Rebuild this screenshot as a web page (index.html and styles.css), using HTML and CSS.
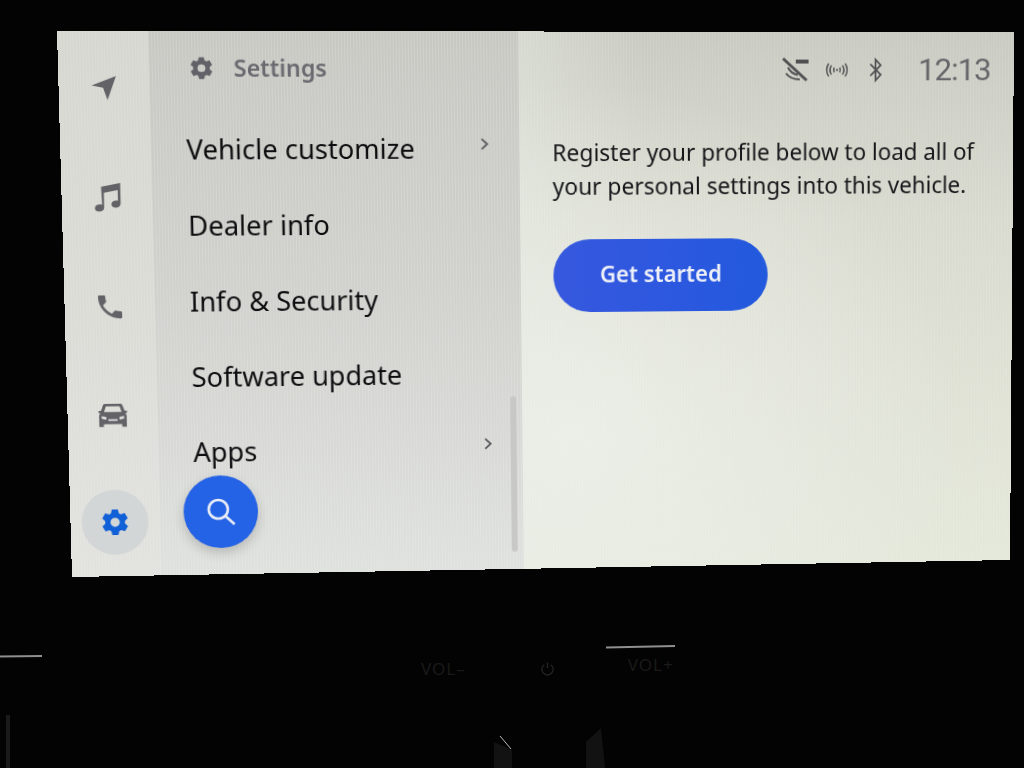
FILE: index.html
```html
<!DOCTYPE html>
<html lang="en">

<head>
    <meta charset="UTF-8">
    <meta name="viewport" content="width=device-width, initial-scale=1.0">
    <title>Settings</title>
    <link rel="stylesheet" href="styles.css">
</head>

<body>
    <svg class="defs" width="0" height="0">
        <symbol id="gear" viewBox="0 0 24 24">
            <path fill-rule="evenodd" d="M9.6 1.6h4.8l.7 3.1 1.5.9 3.1-1 2.4 4.2-2.3 2.1v2.2l2.3 2.1-2.4 4.2-3.1-1-1.5.9-.7 3.1H9.6l-.7-3.1-1.5-.9-3.1 1-2.4-4.2 2.3-2.1v-2.2L1.9 8.800l2.4-4.2 3.100 1 1.500-.9zM12 8.300a3.700 3.700 0 1 0 0 7.400 3.700 3.700 0 0 0 0-7.400z" />
        </symbol>
    </svg>

    <div class="screen">
        <nav class="rail">
            <div class="rail-item">
                <svg class="rail-icon" viewBox="0 0 24 24"><path d="M23 2 1 10.500l10.200 2.300L15 24z" /></svg>
            </div>
            <div class="rail-item">
                <svg class="rail-icon rail-icon-big" viewBox="0 0 24 24"><path d="M7.500 4.500 22 1.500v15.800c0 2-1.800 3.200-3.800 3.200-1.900 0-3.200-1-3.200-2.500 0-1.700 1.700-3 3.700-3 .5 0 1 .1 1.300.2V7L9.500 9.100v11.200c0 2-1.800 3.200-3.800 3.200-1.900 0-3.200-1-3.200-2.500 0-1.700 1.700-3 3.700-3 .7 0 1.300.1 1.800.4z" /></svg>
            </div>
            <div class="rail-item">
                <svg class="rail-icon rail-icon-big" viewBox="0 0 24 24"><path d="M6.620 10.790c1.440 2.830 3.760 5.140 6.590 6.590l2.200-2.200c.27-.27.67-.36 1.020-.24 1.120.37 2.330.57 3.570.57.550 0 1 .45 1 1V20c0 .55-.45 1-1 1-9.390 0-17-7.610-17-17 0-.55.45-1 1-1h3.500c.55 0 1 .45 1 1 0 1.250.2 2.450.57 3.570.11.35.03.74-.25 1.020l-2.200 2.200z" /></svg>
            </div>
            <div class="rail-item">
                <svg class="rail-icon rail-icon-big" viewBox="0 0 24 24"><path fill-rule="evenodd" d="M6.500 3h11c1 0 1.700.5 2 1.400L21 8.500h1.800v1.600l-1.300.5c.6.6 1 1.400 1 2.400V21h-3.500v-2h-14v2H1.500v-8c0-1 .4-1.800 1-2.400l-1.300-.5V8.500H3l1.500-4.100C4.800 3.500 5.500 3 6.500 3zM6.800 5 5.300 9.500h13.400L17.200 5zM3.500 12.500v2.300l3.500.7v-2.200zm17 0-3.500.8v2.200l3.500-.7zM8.500 15v1.500h7V15z" /></svg>
            </div>
            <div class="rail-item">
                <div class="rail-active">
                    <svg class="rail-gear"><use href="#gear" /></svg>
                </div>
            </div>
        </nav>

        <section class="panel">
            <header class="panel-head">
                <svg class="panel-gear"><use href="#gear" /></svg>
                <span>Settings</span>
            </header>
            <ul class="menu">
                <li class="menu-row">Vehicle customize
                    <svg class="chevron" viewBox="0 0 10 14"><path d="M2 1.500 8 7l-6 5.500" /></svg>
                </li>
                <li class="menu-row">Dealer info</li>
                <li class="menu-row">Info &amp; Security</li>
                <li class="menu-row">Software update</li>
                <li class="menu-row">Apps
                    <svg class="chevron" viewBox="0 0 10 14"><path d="M2 1.500 8 7l-6 5.500" /></svg>
                </li>
            </ul>
            <div class="scrollbar"></div>
            <button class="search-btn">
                <svg viewBox="0 0 32 32"><circle cx="13.500" cy="13.500" r="9.500" /><path d="m20.500 20.500 9 8.500" /></svg>
            </button>
        </section>

        <main class="content">
            <div class="status">
                <svg class="status-icon" viewBox="0 0 28 26">
                    <path class="slash" d="M2 2 26 24" />
                    <path class="thick" d="M15 5h13" />
                    <path d="M7 11c2 4 5 6.500 10 7.500M5 17c3 4 8 6 14 6" />
                </svg>
                <svg class="status-icon status-radio" viewBox="0 0 28 18">
                    <path d="M5 2c-3 4-3 10 0 14M8 4c-2 3-2 7 0 10M23 2c3 4 3 10 0 14M20 4c2 3 2 7 0 10M11 6.500c-1 2-1 3 0 5M17 6.500c1 2 1 3 0 5" />
                    <circle cx="14" cy="9" r="1.200" />
                </svg>
                <svg class="status-icon status-bt" viewBox="0 0 16 26">
                    <path d="M2 7 13 18 7.500 24V2L13 8 2 19" />
                </svg>
                <span class="clock">12:13</span>
            </div>
            <p class="intro">Register your profile below to load all of your personal settings into this vehicle.</p>
            <button class="start-btn">Get started</button>
        </main>
    </div>

    <div class="bezel">
        <span class="vol">VOL&#8211;</span>
        <svg class="power" viewBox="0 0 16 16"><path d="M8 1.500v6M4.500 4a6 6 0 1 0 7 0" /></svg>
        <span class="vol vol-up">VOL+</span>
    </div>

    <svg class="glints" viewBox="0 0 1024 768">
        <path class="glint" d="M0 656.500 42 656M606 647.500 675 646" />
        <path class="glint-thin" d="M500 736 511 749" />
        <path class="wedge" d="M494 768V742L512 750V768zM586 768V742L601 728 605 768z" />
        <path class="glint-faint" d="M8 715V768" />
    </svg>
</body>

</html>
```

FILE: styles.css
```css
* {
    margin: 0;
    padding: 0;
    box-sizing: border-box;
}

body {
    background: #030303;
    width: 1024px;
    height: 768px;
    overflow: hidden;
    font-family: 'Noto Sans', sans-serif;
}

.defs {
    display: block;
}

/* the photo looks at the screen slightly from one side */
.screen {
    display: flex;
    width: 957px;
    height: 546px;
    background: #e4e6dd;
    transform-origin: 0 0;
    transform: matrix3d(1.03682, 0.002207, 0, 0.00003631, 0.030163, 1.02156, 0, 0.00003737, 0, 0, 1, 0, 57, 31, 0, 1);
}

.rail {
    flex: 0 0 88px;
    display: flex;
    flex-direction: column;
    background:
        repeating-linear-gradient(90deg, rgba(255, 255, 255, 0.1) 0 1px, transparent 1px 3px),
        linear-gradient(180deg, #d6d7d0 0%, #dcdcd7 55%, #e2e3df 100%);
}

.rail-item {
    flex: 1;
    display: flex;
    align-items: center;
    justify-content: center;
}

.rail-icon {
    width: 26px;
    height: 26px;
    fill: #626267;
}

.rail-icon-big {
    width: 31px;
    height: 31px;
}

.rail-active {
    width: 66px;
    height: 66px;
    border-radius: 50%;
    background: #d3d6d6;
    display: flex;
    align-items: center;
    justify-content: center;
}

.rail-gear {
    width: 30px;
    height: 30px;
    fill: #1160d8;
}

.panel {
    position: relative;
    flex: 0 0 365px;
    background:
        repeating-linear-gradient(90deg, rgba(255, 255, 255, 0.14) 0 1px, transparent 1px 3px),
        linear-gradient(180deg, #c8c8c3 0%, #d0d0cc 45%, #dfe1de 100%);
    padding-left: 35px;
    padding-right: 30px;
}

.panel-head {
    display: flex;
    align-items: center;
    gap: 19px;
    height: 72px;
    margin-bottom: 6px;
    font-size: 23px;
    font-weight: 600;
    color: #6a6a70;
    padding-left: 4px;
}

.panel-gear {
    width: 25px;
    height: 25px;
    fill: #616167;
}

.menu {
    list-style: none;
}

.menu-row {
    display: flex;
    align-items: center;
    justify-content: space-between;
    height: 76px;
    font-size: 27px;
    color: #0e0e10;
}

.chevron {
    width: 10px;
    height: 13px;
    margin-top: -8px;
    fill: none;
    stroke: #58585c;
    stroke-width: 1.900;
}

.scrollbar {
    position: absolute;
    right: 6px;
    top: 368px;
    width: 6px;
    height: 160px;
    border-radius: 3px;
    background: #c8c8c7;
}

.search-btn {
    position: absolute;
    left: 24px;
    top: 445px;
    width: 74px;
    height: 74px;
    border: none;
    border-radius: 50%;
    background: #2462e6;
    box-shadow: 0 5px 12px rgba(0, 0, 0, 0.18);
    display: flex;
    align-items: center;
    justify-content: center;
}

.search-btn svg {
    width: 32px;
    height: 32px;
    fill: none;
    stroke: #e8ecf5;
    stroke-width: 2.600;
}

.content {
    flex: 1;
    padding-left: 33px;
    padding-right: 24px;
    background:
        repeating-linear-gradient(90deg, rgba(255, 255, 255, 0.1) 0 1px, transparent 1px 3px),
        radial-gradient(ellipse at 10% 75%, rgba(236, 239, 232, 0.9) 0%, rgba(236, 239, 232, 0) 62%),
        linear-gradient(90deg, rgba(228, 233, 225, 0.5) 0%, rgba(228, 233, 225, 0) 25%),
        linear-gradient(180deg, #c9cac1 0%, #d9dacf 35%, #dfe1d5 65%, #e4e8da 100%);
}

.status {
    display: flex;
    align-items: center;
    justify-content: flex-end;
    height: 76px;
    color: #66666a;
}

.status-icon {
    width: 28px;
    height: 26px;
    fill: none;
    stroke: #505053;
    stroke-width: 2;
}

.slash {
    stroke-width: 3;
}

.thick {
    stroke-width: 4;
}

.status-radio {
    width: 26px;
    height: 17px;
    margin-left: 16px;
    stroke-width: 1.600;
}

.status-radio circle {
    fill: #505053;
    stroke: none;
}

.status-bt {
    width: 16px;
    height: 25px;
    margin-left: 19px;
    stroke-width: 1.800;
}

.clock {
    margin-left: 35px;
    font-family: 'Roboto', sans-serif;
    font-weight: 400;
    font-size: 32px;
    letter-spacing: -1px;
}

.intro {
    width: 440px;
    margin-top: 28px;
    font-size: 23px;
    line-height: 34px;
    color: #17171a;
}

.start-btn {
    display: block;
    width: 218px;
    height: 74px;
    margin-top: 37px;
    padding-bottom: 4px;
    border: none;
    border-radius: 37px;
    background: linear-gradient(90deg, #3658de 0%, #2c58df 55%, #2259dd 100%);
    color: #eef0f8;
    font-family: 'Noto Sans', sans-serif;
    font-size: 22.500px;
    font-weight: 600;
}

.bezel {
    display: flex;
    align-items: center;
    padding-left: 421px;
    margin-top: 111px;
    color: #1a1a1a;
}

.vol {
    font-size: 17px;
    letter-spacing: 1px;
}

.vol-up {
    margin-left: 73px;
    margin-top: -8px;
}

.power {
    width: 15px;
    height: 15px;
    margin-left: 74px;
    fill: none;
    stroke: #222;
    stroke-width: 1.500;
}

.glints {
    position: absolute;
    left: 0;
    top: 0;
    width: 1024px;
    height: 768px;
    fill: none;
}

.glint {
    stroke: #8f8f8f;
    stroke-width: 2;
}

.glint-thin {
    stroke: #b8b8b8;
    stroke-width: 1;
}

.glint-faint {
    stroke: #1a1a1a;
    stroke-width: 4;
}

.wedge {
    fill: #121212;
}
```
